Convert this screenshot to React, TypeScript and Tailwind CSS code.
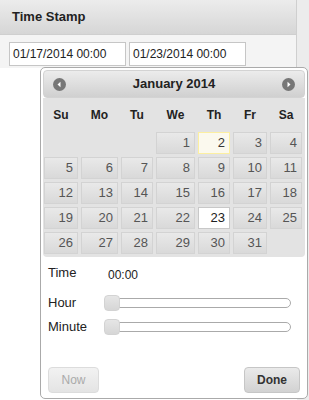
import React from "react"

const cols = ["w-[34px]", "w-[37px]", "w-[32px]", "w-[39px]", "w-[32px]", "w-[34px]", "w-[32px]"]
const heads = ["Su", "Mo", "Tu", "We", "Th", "Fr", "Sa"]

// January 2014 starts on a Wednesday
const weeks: (number | null)[][] = [
  [null, null, null, 1, 2, 3, 4],
  [5, 6, 7, 8, 9, 10, 11],
  [12, 13, 14, 15, 16, 17, 18],
  [19, 20, 21, 22, 23, 24, 25],
  [26, 27, 28, 29, 30, 31, null],
]

function DayCell({ day, col }: { day: number | null; col: number }) {
  if (day === null) return <div className={`${cols[col]} h-[22px]`} />
  let look = "bg-gradient-to-b from-[#e9e9e9] to-[#d9d9d9] border-[#d3d3d3] text-[#555]"
  if (day === 2) look = "bg-[#fbf9ee] border-[#fcefa1] text-[#363636]"
  if (day === 23) look = "bg-white border-[#c8c8c8] text-[#212121]"
  return (
    <div className={`${cols[col]} h-[22px] border ${look} flex items-center justify-end pr-[4px] text-[13px]`}>
      {day}
    </div>
  )
}

function Slider() {
  return (
    <div className="relative w-[187px] h-[10px] rounded-full border border-[#aaa] bg-white">
      <div className="absolute left-[-1px] top-[-4px] w-[16px] h-[16px] rounded-[4px] border border-[#d3d3d3] bg-gradient-to-b from-[#e6e6e6] to-[#d6d6d6]" />
    </div>
  )
}

function Arrow({ dir }: { dir: "l" | "r" }) {
  return (
    <svg width="13" height="13" viewBox="0 0 13 13">
      <circle cx="6.5" cy="6.5" r="6.5" fill="#777" />
      {dir === "l" ? <path d="M4.5 6.5 L7.5 3.8 V9.2 Z" fill="#fff" /> : <path d="M8.5 6.5 L5.5 3.8 V9.2 Z" fill="#fff" />}
    </svg>
  )
}

export default function App() {
  return (
    <div className="relative w-[309px] h-[400px] overflow-hidden flex bg-white font-['Liberation_Sans',Arial,sans-serif]">
      {/* panel */}
      <div className="w-[297px] flex flex-col">
        <div className="h-[35px] border-b border-r border-[#cfcfcf] bg-gradient-to-b from-[#ececec] to-[#d6d6d6] flex items-center pl-[12px] text-[13px] font-bold text-[#222]">
          Time Stamp
        </div>
        <div className="h-[33px] bg-[#f4f4f4] border-r border-[#cfcfcf] flex items-start gap-[3px] pt-[7px] pl-[9px]">
          <div className="w-[117px] h-[24px] bg-white border border-[#c6c6c6] flex items-center pl-[3px] text-[12px] text-[#222]">01/17/2014 00:00</div>
          <div className="w-[117px] h-[24px] bg-white border border-[#c6c6c6] flex items-center pl-[3px] text-[12px] text-[#222]">01/23/2014 00:00</div>
        </div>
      </div>
      <div className="flex-1 bg-[#ececec]" />

      {/* datepicker popup */}
      <div className="absolute left-[40px] top-[67px] w-[268px] h-[332px] bg-white border border-[#aaa] rounded-[5px] p-[2px] flex flex-col">
        <div className="h-[28px] rounded-[4px] border border-[#d3d3d3] bg-gradient-to-b from-[#ececec] to-[#d0d0d0] flex items-center justify-between px-[9px]">
          <Arrow dir="l" />
          <span className="text-[13px] font-bold text-[#222]">January 2014</span>
          <Arrow dir="r" />
        </div>
        <div className="bg-[#e3e3e3] rounded-b-[4px] pl-[1px] pb-[3px]">
          <div className="flex gap-[3px] h-[34px] items-center">
            {heads.map((h, i) => (
              <div key={h} className={`${cols[i]} text-center text-[12px] font-bold text-[#222]`}>{h}</div>
            ))}
          </div>
          <div className="flex flex-col gap-[3px]">
            {weeks.map((w, r) => (
              <div key={r} className="flex gap-[3px]">
                {w.map((d, i) => <DayCell key={i} day={d} col={i} />)}
              </div>
            ))}
          </div>
        </div>

        <div className="pl-[5px] pt-[7px] text-[13px] text-[#222]">
          <div className="flex items-center h-[18px]">
            <span className="w-[60px]">Time</span>
            <span className="mt-[4px] text-[12px]">00:00</span>
          </div>
          <div className="flex items-center h-[24px] mt-[9px]">
            <span className="w-[56px]">Hour</span>
            <Slider />
          </div>
          <div className="flex items-center h-[24px]">
            <span className="w-[56px]">Minute</span>
            <Slider />
          </div>
        </div>

        <div className="mt-auto flex justify-between px-[5px] pb-[3px]">
          <button className="w-[51px] h-[26px] rounded-[4px] border border-[#dcdcdc] bg-gradient-to-b from-[#f2f2f2] to-[#e4e4e4] text-[12px] text-[#aaa]">Now</button>
          <button className="w-[56px] h-[26px] rounded-[4px] border border-[#c6c6c6] bg-gradient-to-b from-[#eaeaea] to-[#d2d2d2] text-[12px] font-bold text-[#333]">Done</button>
        </div>
      </div>
    </div>
  )
}
